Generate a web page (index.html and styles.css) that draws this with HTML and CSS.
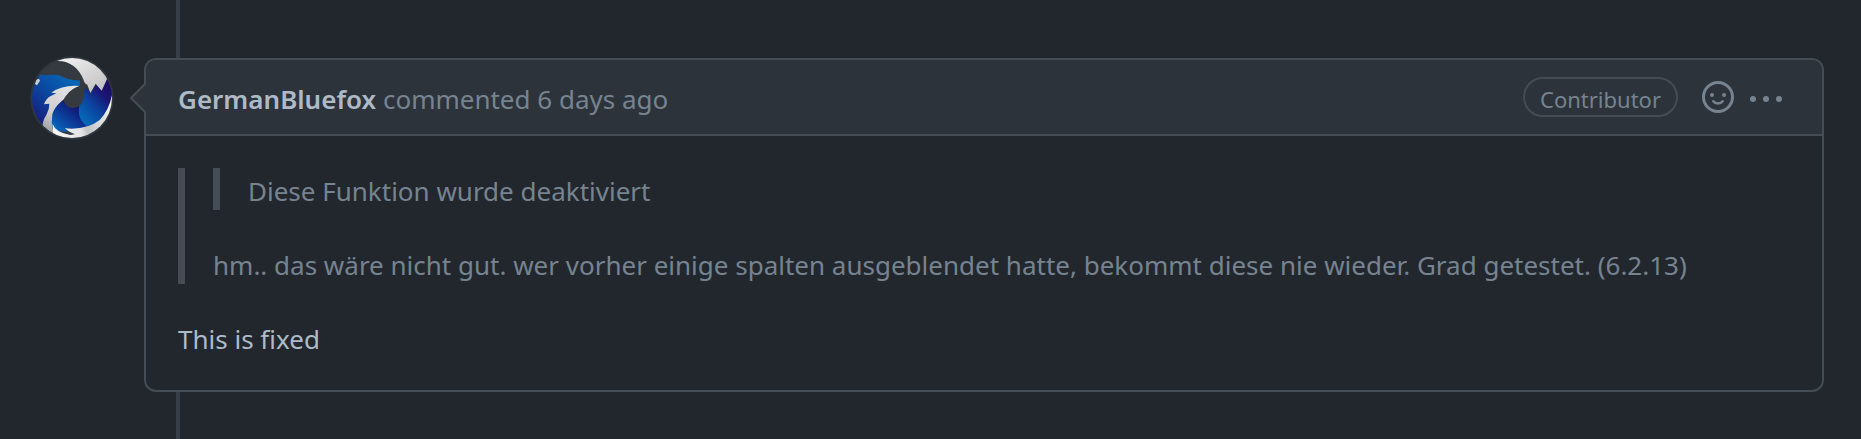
FILE: index.html
```html
<!DOCTYPE html>
<html lang="en">
<head>
<meta charset="utf-8">
<meta name="viewport" content="width=device-width, initial-scale=1">
<title>Comment by GermanBluefox</title>
<link rel="stylesheet" href="styles.css">
</head>
<body>
<main class="timeline">
  <a class="avatar" href="#GermanBluefox" aria-label="GermanBluefox">
    <svg class="avatar-image" viewBox="30 33 252 252" aria-hidden="true">
      <defs>
        <clipPath id="disc"><circle cx="156" cy="159" r="120"/></clipPath>
        <linearGradient id="head" gradientUnits="userSpaceOnUse" x1="160" y1="100" x2="50" y2="230">
          <stop offset="0" stop-color="#0768ba"/><stop offset=".5" stop-color="#0b469e"/><stop offset="1" stop-color="#171c7c"/>
        </linearGradient>
        <linearGradient id="belly" gradientUnits="userSpaceOnUse" x1="170" y1="180" x2="110" y2="255">
          <stop offset="0" stop-color="#170f6c"/><stop offset=".5" stop-color="#0b3b98"/><stop offset="1" stop-color="#0768ba"/>
        </linearGradient>
        <linearGradient id="tail" gradientUnits="userSpaceOnUse" x1="274" y1="120" x2="180" y2="210">
          <stop offset="0" stop-color="#1c0b62"/><stop offset=".3" stop-color="#1a1676"/><stop offset=".65" stop-color="#0a45a0"/><stop offset="1" stop-color="#0666b5"/>
        </linearGradient>
        <linearGradient id="silver" x1="0" y1="0" x2="1" y2="1">
          <stop offset="0" stop-color="#f8f8f8"/><stop offset=".5" stop-color="#d6d6d6"/><stop offset="1" stop-color="#b9b9bb"/>
        </linearGradient>
        <linearGradient id="chest" gradientUnits="userSpaceOnUse" x1="150" y1="120" x2="75" y2="265">
          <stop offset="0" stop-color="#e4e4e4"/><stop offset=".6" stop-color="#cfcfd0"/><stop offset="1" stop-color="#97999c"/>
        </linearGradient>
        <linearGradient id="rim" gradientUnits="userSpaceOnUse" x1="90" y1="250" x2="270" y2="190">
          <stop offset="0" stop-color="#f8f8f8"/><stop offset=".45" stop-color="#e4e4e4"/><stop offset=".55" stop-color="#c2c4c6"/><stop offset="1" stop-color="#f2f2f2"/>
        </linearGradient>
      </defs>
      <circle cx="156" cy="159" r="125" fill="#30363c"/>
      <g clip-path="url(#disc)">
        <rect x="30" y="33" width="252" height="252" fill="#343a40"/>
        <path d="M30 128 L54 101 L60 88 L74 91 Q96 88 118 91 Q138 105 180 107 L179 123 Q150 126 128 140 L102 165 L84 215 L70 262 L30 250Z" fill="url(#head)"/>
        <path d="M30 100 L52 96 L54 101 L38 128 L30 128Z" fill="#343a40"/>
        <path d="M48 104 L57 101 L60 107 L51 121 L45 117Z" fill="#c9ced4"/>
        <path d="M130 164 C136 181 147 189 160 189 Q170 188 177 184 Q173 218 203 246 Q170 262 133 260 L102 256 Q85 228 96 207 Q104 181 130 164Z" fill="url(#belly)"/>
        <path d="M193 132 Q197 132 202 130 L212 146 L228 119 L246 136 L262 96 L285 130 L276 190 L244 230 L202 246 C184 231 172 211 178 184 C189 173 194 154 193 132Z" fill="url(#tail)"/>
        <path d="M108 48 C146 45 177 68 190 103 Q193 118 202 119 L211 144 L227 116 L245 137 L262 100 L290 90 Q252 40 213 33 Q160 25 108 48Z" fill="url(#silver)"/>
        <path d="M178 123 C150 133 141 148 130 164 C114 177 103 188 97 208 Q93 232 98 252 L104 272 L75 267 Q64 252 68 237 Q70 222 80 208 Q88 194 88 176 L72 178 Q78 161 91 154 L109 145 L94 143 Q128 119 178 123Z" fill="url(#chest)"/>
        <path d="M98 236 Q106 262 151 270 L165 268 Q148 262 134 250 L155 251 Q208 250 239 225 Q267 196 276 150 L290 150 L280 250 L200 300 L100 290Z" fill="url(#rim)"/>
      </g>
    </svg>
  </a>
  <article class="comment">
    <svg class="caret" viewBox="0 0 16 30" aria-hidden="true">
      <path class="caret-fill" d="M16 1 L2 15 L16 29Z"/>
      <path class="caret-line" d="M15 1 L1 15 L15 29"/>
    </svg>
    <header class="comment-header">
      <h3 class="comment-title"><a class="author" href="#GermanBluefox">GermanBluefox</a> commented <a class="time" href="#comment">6 days ago</a></h3>
      <div class="actions">
        <span class="badge">Contributor</span>
        <button class="icon-button" type="button" aria-label="Add reaction">
          <svg class="icon" viewBox="0 0 32 32" aria-hidden="true">
            <circle cx="16" cy="16" r="14.5" fill="none" stroke="currentColor" stroke-width="3"/>
            <circle cx="10" cy="14" r="2" fill="currentColor"/>
            <circle cx="22" cy="14" r="2" fill="currentColor"/>
            <path d="M11.3 20.3 Q13 22.5 16 22.5 T20.7 20.3" fill="none" stroke="currentColor" stroke-width="2.6" stroke-linecap="round"/>
          </svg>
        </button>
        <button class="icon-button" type="button" aria-label="Show options">
          <svg class="icon" viewBox="0 0 32 32" aria-hidden="true">
            <g fill="currentColor"><circle cx="3" cy="18" r="3"/><circle cx="16" cy="18" r="3"/><circle cx="29" cy="18" r="3"/></g>
          </svg>
        </button>
      </div>
    </header>
    <div class="comment-body">
      <blockquote class="quote">
        <blockquote class="quote"><p>Diese Funktion wurde deaktiviert</p></blockquote>
        <p>hm.. das wäre nicht gut. wer vorher einige spalten ausgeblendet hatte, bekommt diese nie wieder. Grad getestet. (6.2.13)</p>
      </blockquote>
      <p>This is fixed</p>
    </div>
  </article>
</main>
</body>
</html>
```
FILE: styles.css
```css
* {
  box-sizing: border-box;
}

body,
h3,
p,
blockquote {
  margin: 0;
}

body {
  background: #22272e;
  color: #adbac7;
  font-family: "Segoe UI", "Noto Sans", "Open Sans", sans-serif;
  font-size: 26px;
  line-height: 38px;
}

p,
h3 {
  padding-top: 4px;
}

a {
  color: inherit;
  text-decoration: none;
}

.timeline {
  position: relative;
  display: flex;
  align-items: flex-start;
  gap: 30px;
  min-height: 100vh;
  padding: 56px 37px 45px 30px;
}

.timeline::before {
  content: "";
  position: absolute;
  top: 0;
  bottom: 0;
  left: 176px;
  width: 4px;
  background: #373e47;
}

.avatar {
  flex: none;
  width: 84px;
}

.avatar-image {
  display: block;
  width: 100%;
}

.comment {
  position: relative;
  flex: 1;
  min-width: 0;
  margin-top: 2px;
  border: 2px solid #444c56;
  border-radius: 12px;
  background: #22272e;
}

.caret {
  position: absolute;
  top: 23px;
  left: -16px;
  width: 16px;
  height: 30px;
}

.caret-fill {
  fill: #2d333b;
}

.caret-line {
  fill: none;
  stroke: #444c56;
  stroke-width: 2;
}

.comment-header {
  display: flex;
  align-items: center;
  justify-content: space-between;
  gap: 24px;
  padding: 16px 40px 16px 32px;
  border-bottom: 2px solid #444c56;
  border-radius: 10px 10px 0 0;
  background: #2d333b;
  color: #768390;
}

.comment-title {
  font-size: 26px;
  font-weight: 400;
}

.author {
  color: #adbac7;
  font-weight: 600;
}

.actions {
  display: flex;
  align-items: center;
}

.badge {
  margin-right: 24px;
  padding: 4px 15px 0;
  border: 2px solid #444c56;
  border-radius: 20px;
  font-size: 22px;
  line-height: 32px;
}

.icon-button {
  padding: 0;
  border: 0;
  background: none;
  color: inherit;
  cursor: pointer;
}

.icon-button + .icon-button {
  margin-left: 16px;
}

.icon {
  display: block;
  width: 32px;
  height: 32px;
}

.comment-body {
  display: grid;
  gap: 32px;
  padding: 32px;
}

.quote {
  display: grid;
  gap: 32px;
  padding-left: 28px;
  border-left: 7px solid #444c56;
  color: #768390;
}
```
